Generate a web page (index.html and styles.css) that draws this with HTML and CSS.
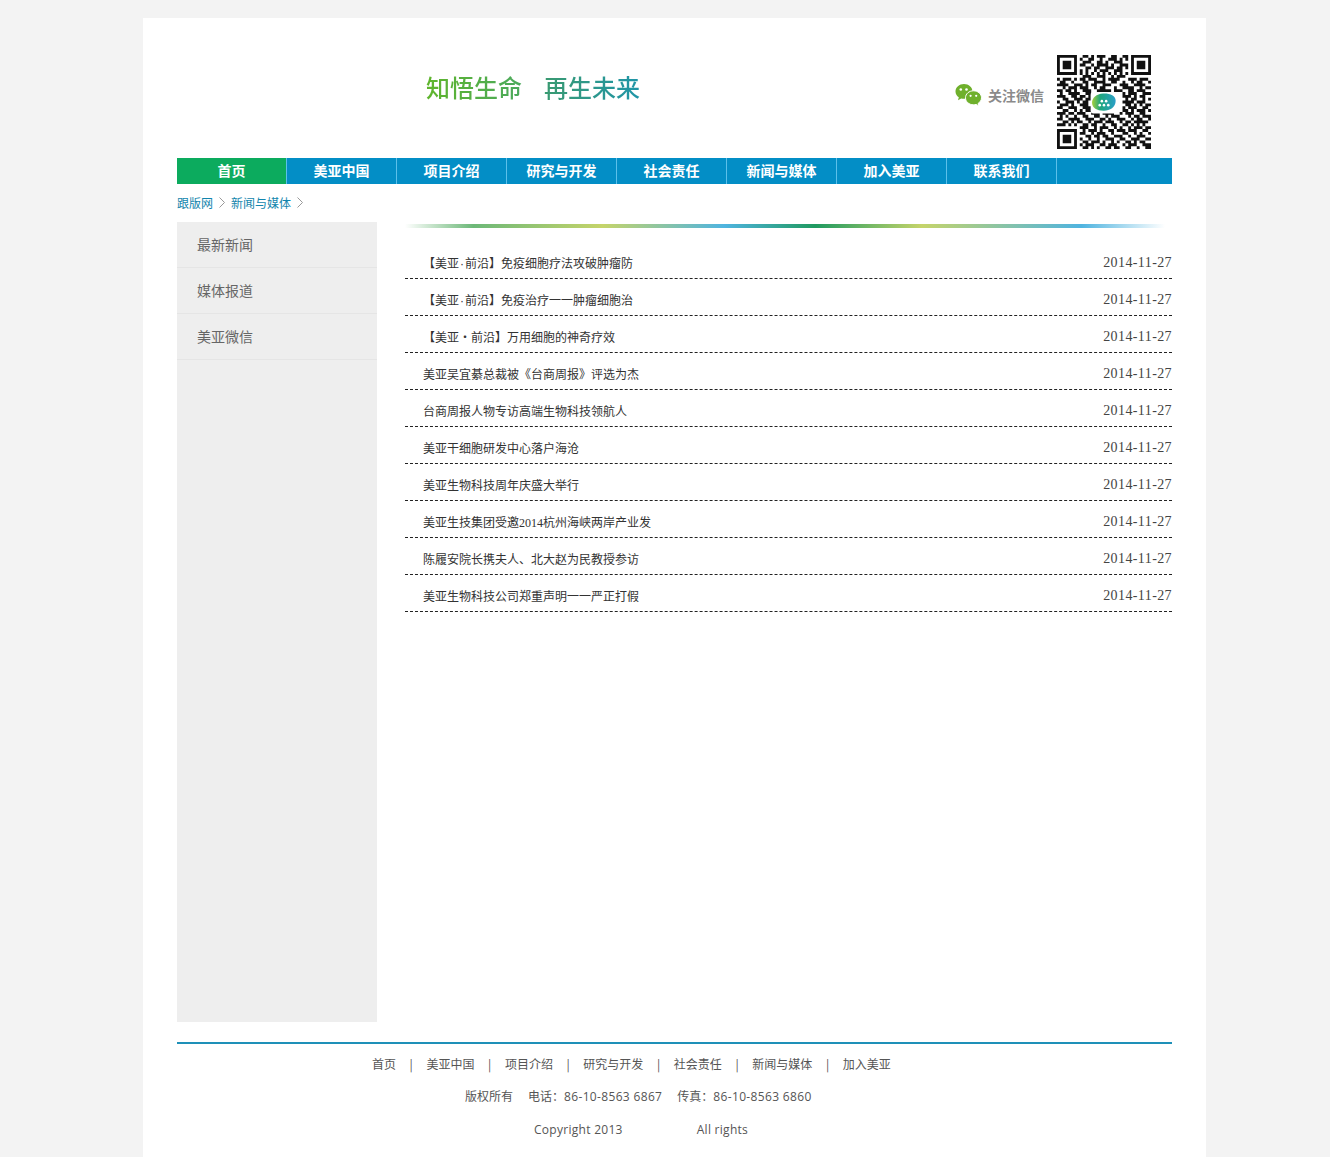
FILE: index.html
```html
<!DOCTYPE html>
<html lang="zh-CN">
<head>
    <meta charset="UTF-8">
    <title>新闻与媒体</title>
    <link rel="stylesheet" href="styles.css">
</head>
<body>

<div class="wrapper">
    <div class="header">
        <div class="slogan">
            <span class="slogan-a">知悟生命</span>
            <span class="slogan-b">再生未来</span>
        </div>
        <div class="follow">
            <svg class="wechat" viewBox="0 0 27 24" width="27" height="24">
                <path fill="#6fb02c" d="M9 1C4.300 1 .5 4.300 .5 8.400c0 2.400 1.300 4.500 3.300 5.900l-.8 2.900 3.200-1.800c.9.300 1.800.4 2.800.4 4.700 0 8.500-3.300 8.500-7.400S13.700 1 9 1z"/>
                <path fill="#6fb02c" stroke="#fff" d="M26.500 14.800c0-3.900-3.500-7-8-7s-8 3.100-8 7 3.500 7 8 7c.9 0 1.800-.1 2.600-.4l2.700 1.500-.7-2.500c2.100-1.300 3.400-3.300 3.400-5.600z"/>
                <circle fill="#fff" cx="5.800" cy="6.500" r="1.300"/>
                <circle fill="#fff" cx="11.500" cy="6.500" r="1.300"/>
                <circle fill="#fff" cx="15.600" cy="12.800" r="1.100"/>
                <circle fill="#fff" cx="21.200" cy="12.800" r="1.100"/>
            </svg>
            <span>关注微信</span>
        </div>
        <svg class="qrcode" viewBox="0 0 33 33" width="94" height="94">
            <defs>
                <linearGradient id="leaf" x1="0" y1="0" x2="1" y2="0">
                    <stop offset="0" stop-color="#a5cf3a"/>
                    <stop offset=".35" stop-color="#1fa67e"/>
                    <stop offset="1" stop-color="#2a9fc8"/>
                </linearGradient>
            </defs>
            <path fill="#111" fill-rule="evenodd" d="M0 0h7v7h-7zM1 1v5h5v-5zM2 2h3v3h-3zM26 0h7v7h-7zM27 1v5h5v-5zM28 2h3v3h-3zM0 26h7v7h-7zM1 27v5h5v-5zM2 28h3v3h-3z"/>
            <path fill="none" stroke="#111" d="M9 .5h2M12 .5h1M14 .5h3M19 .5h2M23 .5h2
                M8 1.500h1M11 1.500h2M15 1.500h1M18 1.500h3M22 1.500h1M24 1.500h1
                M9 2.500h3M14 2.500h2M17 2.500h1M20 2.500h3
                M8 3.500h2M12 3.500h1M14 3.500h4M19 3.500h1M22 3.500h3
                M10 4.500h2M13 4.500h2M17 4.500h3M21 4.500h2M24 4.500h1
                M8 5.500h1M10 5.500h1M13 5.500h1M15 5.500h3M20 5.500h3
                M8 6.500h1M10 6.500h1M12 6.500h1M14 6.500h1M16 6.500h1M18 6.500h1M20 6.500h1M22 6.500h1M24 6.500h1
                M9 7.500h3M14 7.500h3M19 7.500h1M21 7.500h3
                M0 8.500h1M2 8.500h3M6 8.500h1M8 8.500h2M11 8.500h3M16 8.500h1M18 8.500h4M25 8.500h3M29 8.500h3
                M1 9.500h2M5 9.500h1M9 9.500h2M13 9.500h4M19 9.500h2M23 9.500h1M26 9.500h1M28 9.500h2M32 9.500h1
                M0 10.500h4M6 10.500h3M10 10.500h1M12 10.500h2M16 10.500h3M22 10.500h3M27 10.500h4
                M2 11.500h1M4 11.500h3M8 11.500h3M13 11.500h1M15 11.500h2M20 11.500h1M23 11.500h4M29 11.500h1M31 11.500h2
                M0 12.500h2M3 12.500h2M6 12.500h1M9 12.500h3M14 12.500h5M20 12.500h3M25 12.500h2M28 12.500h3
                M1 13.500h1M4 13.500h4M10 13.500h2M23 13.500h1M25 13.500h3M30 13.500h3
                M0 14.500h3M5 14.500h2M8 14.500h2M11 14.500h1M23 14.500h3M27 14.500h1M29 14.500h2
                M2 15.500h2M6 15.500h3M10 15.500h2M24 15.500h1M26 15.500h2M30 15.500h1M32 15.500h1
                M0 16.500h1M3 16.500h3M7 16.500h1M9 16.500h2M23 16.500h4M28 16.500h3
                M1 17.500h3M5 17.500h1M8 17.500h3M24 17.500h2M27 17.500h1M29 17.500h1M31 17.500h2
                M0 18.500h2M4 18.500h3M9 18.500h3M23 18.500h1M25 18.500h3M30 18.500h2
                M2 19.500h2M6 19.500h1M8 19.500h1M10 19.500h2M23 19.500h2M26 19.500h1M28 19.500h3M32 19.500h1
                M0 20.500h3M4 20.500h2M7 20.500h3M12 20.500h3M16 20.500h4M22 20.500h1M24 20.500h3M29 20.500h2
                M1 21.500h1M3 21.500h1M6 21.500h1M9 21.500h2M13 21.500h2M17 21.500h1M19 21.500h3M25 21.500h1M27 21.500h2M30 21.500h3
                M0 22.500h2M4 22.500h4M10 22.500h3M15 22.500h2M18 22.500h1M21 22.500h3M26 22.500h1M28 22.500h2M32 22.500h1
                M2 23.500h2M5 23.500h1M7 23.500h2M11 23.500h1M13 23.500h3M17 23.500h3M22 23.500h1M24 23.500h2M27 23.500h5
                M0 24.500h3M4 24.500h1M6 24.500h1M9 24.500h2M12 24.500h2M16 24.500h1M19 24.500h2M23 24.500h2M26 24.500h1M28 24.500h1M30 24.500h1
                M8 25.500h3M13 25.500h1M15 25.500h3M20 25.500h1M22 25.500h1M25 25.500h1M27 25.500h3M31 25.500h2
                M9 26.500h1M11 26.500h3M15 26.500h1M18 26.500h2M21 26.500h3M25 26.500h3M30 26.500h2
                M8 27.500h2M12 27.500h1M14 27.500h3M19 27.500h1M23 27.500h2M27 27.500h1M29 27.500h1M32 27.500h1
                M10 28.500h2M13 28.500h2M16 28.500h2M20 28.500h3M25 28.500h1M28 28.500h3
                M8 29.500h1M11 29.500h1M14 29.500h1M17 29.500h3M22 29.500h2M26 29.500h3M31 29.500h2
                M9 30.500h2M12 30.500h3M16 30.500h1M19 30.500h1M21 30.500h1M24 30.500h2M27 30.500h1M29 30.500h2
                M8 31.500h1M10 31.500h3M15 31.500h2M18 31.500h3M23 31.500h1M25 31.500h3M30 31.500h3
                M9 32.500h2M12 32.500h1M14 32.500h1M17 32.500h2M20 32.500h2M24 32.500h2M28 32.500h1M31 32.500h2"/>
            <rect x="11.800" y="13" width="9" height="7.500" rx="1" fill="#fff"/>
            <path fill="url(#leaf)" d="M12.300 16.800c0-1.700 1.500-3.200 3.900-3.300 2.300-.1 4.400.6 4.400 2.600 0 2.300-2 3.500-4.200 3.500-2.400 0-4.100-1-4.100-2.800z"/>
            <g fill="#fff">
                <circle cx="15" cy="17.600" r=".45"/>
                <circle cx="16.500" cy="17.600" r=".45"/>
                <circle cx="18" cy="17.600" r=".45"/>
                <circle cx="15.750" cy="16.200" r=".45"/>
                <circle cx="17.250" cy="16.200" r=".45"/>
            </g>
        </svg>
    </div>

    <ul class="nav">
        <li class="active"><a href="#">首页</a></li>
        <li><a href="#">美亚中国</a></li>
        <li><a href="#">项目介绍</a></li>
        <li><a href="#">研究与开发</a></li>
        <li><a href="#">社会责任</a></li>
        <li><a href="#">新闻与媒体</a></li>
        <li><a href="#">加入美亚</a></li>
        <li><a href="#">联系我们</a></li>
    </ul>

    <div class="crumbs">
        <a href="#">跟版网</a>
        <svg class="arrow" viewBox="0 0 6 11" width="6" height="11"><path d="M.5 .5l5 5-5 5"/></svg>
        <a href="#">新闻与媒体</a>
        <svg class="arrow" viewBox="0 0 6 11" width="6" height="11"><path d="M.5 .5l5 5-5 5"/></svg>
    </div>

    <div class="main">
        <ul class="side">
            <li><a href="#">最新新闻</a></li>
            <li><a href="#">媒体报道</a></li>
            <li><a href="#">美亚微信</a></li>
        </ul>
        <div class="content">
            <div class="rainbow"></div>
            <ul class="news">
                <li><a href="#">【美亚<span class="half">·</span>前沿】免疫细胞疗法攻破肿瘤防</a><span class="date">2014-11-27</span></li>
                <li><a href="#">【美亚<span class="half">·</span>前沿】免疫治疗一一肿瘤细胞治</a><span class="date">2014-11-27</span></li>
                <li><a href="#">【美亚・前沿】万用细胞的神奇疗效</a><span class="date">2014-11-27</span></li>
                <li><a href="#">美亚吴宜綦总裁被《台商周报》评选为杰</a><span class="date">2014-11-27</span></li>
                <li><a href="#">台商周报人物专访高端生物科技领航人</a><span class="date">2014-11-27</span></li>
                <li><a href="#">美亚干细胞研发中心落户海沧</a><span class="date">2014-11-27</span></li>
                <li><a href="#">美亚生物科技周年庆盛大举行</a><span class="date">2014-11-27</span></li>
                <li><a href="#">美亚生技集团受邀<span class="num">2014</span>杭州海峡两岸产业发</a><span class="date">2014-11-27</span></li>
                <li><a href="#">陈履安院长携夫人、北大赵为民教授参访</a><span class="date">2014-11-27</span></li>
                <li><a href="#">美亚生物科技公司郑重声明一一严正打假</a><span class="date">2014-11-27</span></li>
            </ul>
        </div>
    </div>

    <div class="footer">
        <p class="foot-nav">
            <a href="#">首页</a><i>|</i><a href="#">美亚中国</a><i>|</i><a href="#">项目介绍</a><i>|</i><a href="#">研究与开发</a><i>|</i><a href="#">社会责任</a><i>|</i><a href="#">新闻与媒体</a><i>|</i><a href="#">加入美亚</a>
        </p>
        <p class="foot-tel">版权所有<span class="tel">电话：<span class="digits">86-10-8563 6867</span></span><span class="tel">传真：<span class="digits">86-10-8563 6860</span></span></p>
        <p class="foot-copy">Copyright 2013<span class="blank"></span>All rights</p>
    </div>
</div>

</body>
</html>
```

FILE: styles.css
```css
html, body {
    margin: 0;
    padding: 0;
}

body {
    background-color: #f3f3f3;
    font-family: "Noto Sans CJK SC", "Liberation Sans", sans-serif;
    font-size: 12px;
    color: #333;
    overflow: hidden;
}

a {
    color: inherit;
    text-decoration: none;
}

ul {
    list-style: none;
    margin: 0;
    padding: 0;
}

.wrapper {
    width: 995px;
    height: 1139px;
    margin: 18px 0 0 143px;
    padding: 0 34px;
    background-color: #fff;
}

/* header */
.header {
    display: flex;
    height: 140px;
}

.slogan {
    display: flex;
    gap: 22px;
    margin: 52px 0 0 249px;
    height: 34px;
    font-size: 24px;
    font-weight: 500;
    line-height: 34px;
}

.slogan-a, .slogan-b {
    background-clip: text;
    -webkit-background-clip: text;
    color: transparent;
}

.slogan-a {
    background-image: linear-gradient(90deg, #5fb52c, #4aa95c);
}

.slogan-b {
    background-image: linear-gradient(90deg, #3a9a70, #1f95a8);
}

.follow {
    display: flex;
    align-items: center;
    gap: 6px;
    height: 24px;
    margin: 65px 0 0 315px;
    font-size: 14px;
    font-weight: bold;
    color: #8a8a8a;
}

.wechat {
    flex: none;
}

.qrcode {
    margin: 37px 0 0 13px;
}

/* nav */
.nav {
    display: flex;
    height: 26px;
    background-color: #038ec6;
}

.nav li {
    width: 109px;
    border-right: 1px solid #5cc0ea;
    text-align: center;
    font-size: 14px;
    font-weight: bold;
    line-height: 24px;
    color: #fff;
}

.nav li.active {
    background-color: #0cab5e;
}

/* breadcrumb */
.crumbs {
    display: flex;
    align-items: center;
    gap: 6px;
    height: 36px;
    padding-bottom: 2px;
    color: #1285ad;
}

.arrow {
    fill: none;
    stroke: #999;
}

/* main */
.main {
    display: flex;
    height: 800px;
}

.side {
    width: 200px;
    background-color: #eee;
}

.side li {
    height: 45px;
    padding-left: 20px;
    border-bottom: 1px solid #e5e5e5;
    font-size: 14px;
    line-height: 44px;
    color: #666;
}

.content {
    flex: 1;
    margin-left: 28px;
}

.rainbow {
    height: 4px;
    margin: 2px 7px 0 0;
    background: linear-gradient(90deg, #fff 0, #6cb878 9%, #c5d46a 26%, #4fb4e0 42%, #1f9a60 54%, #c5d46a 68%, #4fb4e0 89%, #fff 100%);
}

.news {
    margin-top: 14px;
}

.news li {
    display: flex;
    justify-content: space-between;
    height: 36px;
    padding-left: 18px;
    border-bottom: 1px dashed #222;
    line-height: 42px;
    color: #333;
}

.half {
    display: inline-block;
    width: 6px;
    font-family: "Liberation Sans", sans-serif;
    text-align: center;
}

.num {
    font-family: "Liberation Serif", serif;
}

.date {
    font-family: "Liberation Serif", serif;
    font-size: 14px;
    letter-spacing: .4px;
    color: #444;
}

/* footer */
.footer {
    margin-top: 20px;
    border-top: 2px solid #1e90b8;
    color: #555;
}

.footer p {
    margin: 0;
    height: 33px;
    line-height: 33px;
    white-space: nowrap;
}

.foot-nav {
    margin-top: 3px !important;
    padding-left: 195px;
}

.foot-nav i {
    margin: 0 13.6px;
    font-style: normal;
}

.foot-tel {
    padding-left: 288px;
    font-family: "Open Sans", "Noto Sans CJK SC", sans-serif;
}

.tel {
    margin-left: 15px;
}

.digits {
    letter-spacing: .34px;
}

.foot-copy {
    padding-left: 357px;
    font-family: "Open Sans", "Noto Sans CJK SC", sans-serif;
    letter-spacing: .28px;
}

.blank {
    display: inline-block;
    width: 74px;
}
```
